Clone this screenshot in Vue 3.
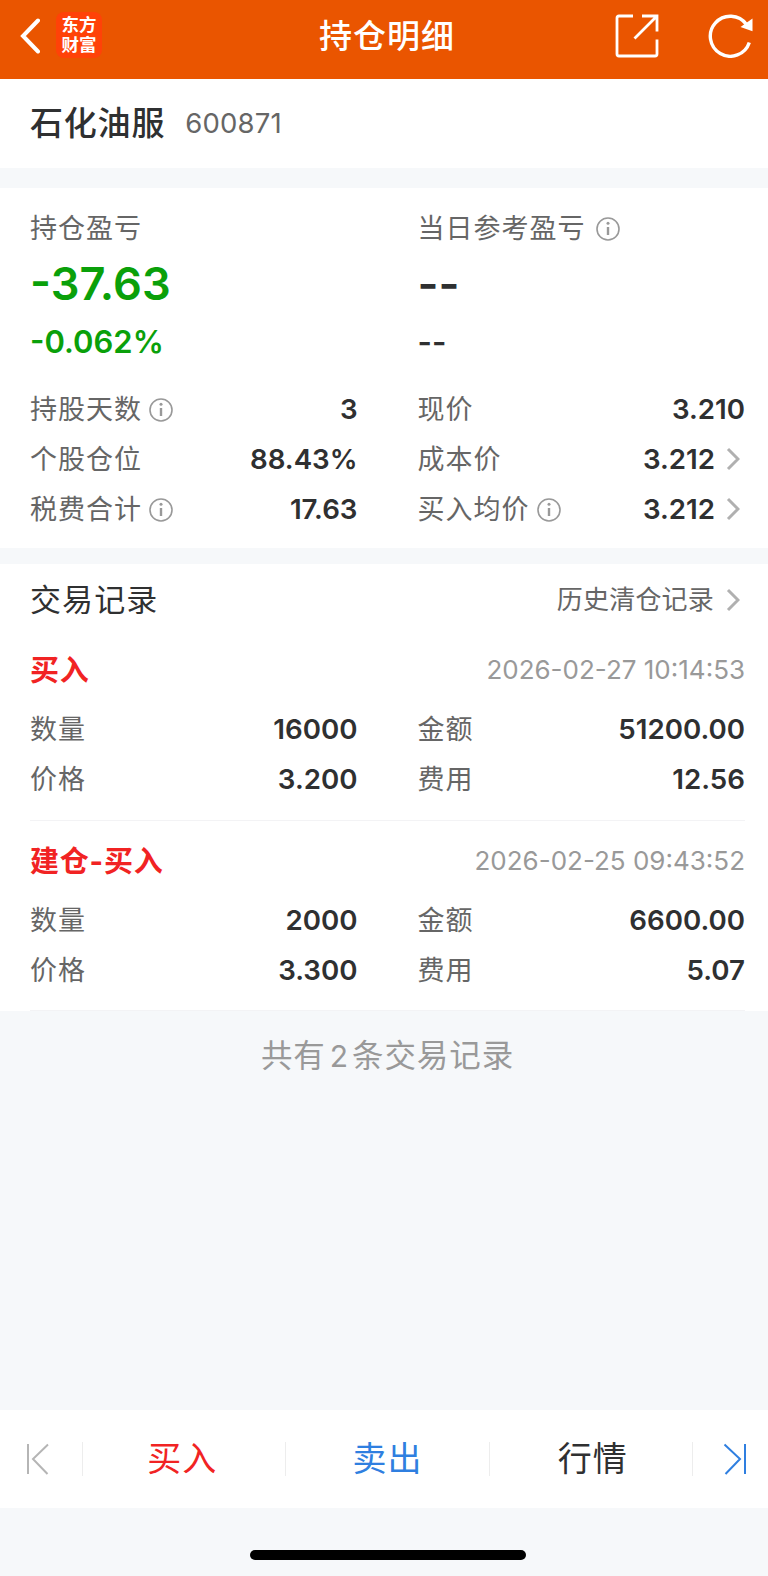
<script setup>
import { ref } from 'vue'

const stock = ref({ name: '石化油服', code: '600871' })

// Position details, listed row by row for the two columns
const details = ref([
  { label: '持股天数', value: '3', info: true },
  { label: '现价', value: '3.210' },
  { label: '个股仓位', value: '88.43%' },
  { label: '成本价', value: '3.212', link: true },
  { label: '税费合计', value: '17.63', info: true },
  { label: '买入均价', value: '3.212', info: true, link: true }
])

const records = ref([
  {
    type: '买入',
    time: '2026-02-27 10:14:53',
    fields: [
      { label: '数量', value: '16000' },
      { label: '金额', value: '51200.00' },
      { label: '价格', value: '3.200' },
      { label: '费用', value: '12.56' }
    ]
  },
  {
    type: '建仓-买入',
    time: '2026-02-25 09:43:52',
    fields: [
      { label: '数量', value: '2000' },
      { label: '金额', value: '6600.00' },
      { label: '价格', value: '3.300' },
      { label: '费用', value: '5.07' }
    ]
  }
])
</script>

<template>
  <div class="page">
    <header class="navbar">
      <div class="nav-left">
        <svg class="back" width="20" height="36" viewBox="0 0 20 36">
          <path d="M18 2.5 L3 18 L18 33.5" />
        </svg>
        <div class="logo"><span>东方</span><span>财富</span></div>
      </div>
      <h1 class="nav-title">持仓明细</h1>
      <div class="nav-right">
        <svg class="share" width="44" height="44" viewBox="0 0 44 44">
          <path d="M18 2 H4 Q2 2 2 4 V40 Q2 42 4 42 H40 Q42 42 42 40 V25.5" />
          <path d="M27 2 H42 V17.5 M42 2 L19.5 24.5" />
        </svg>
        <svg class="refresh" width="46" height="46" viewBox="0 0 46 46">
          <path class="arc" d="M41.3 30.5 A20 20 0 1 1 38.5 12.5" />
          <path class="head" d="M44.5 6.5 V19.3 L32.5 15 Z" />
        </svg>
      </div>
    </header>

    <section class="stock">
      <span class="stock-name">{{ stock.name }}</span>
      <span class="stock-code">{{ stock.code }}</span>
    </section>

    <section class="position">
      <div class="columns">
        <div class="profit green">
          <div class="label">持仓盈亏</div>
          <div class="big">-37.63</div>
          <div class="rate">-0.062%</div>
        </div>
        <div class="profit">
          <div class="label">
            当日参考盈亏
            <svg class="info wide" width="24" height="24" viewBox="0 0 24 24">
              <circle cx="12" cy="12" r="11" />
              <path d="M12 10 V18" />
              <circle class="dot" cx="12" cy="6.2" r="1.5" />
            </svg>
          </div>
          <div class="big">--</div>
          <div class="rate">--</div>
        </div>
      </div>
      <div class="columns rows">
        <div v-for="item in details" :key="item.label" class="row">
          <span class="label">
            {{ item.label }}
            <svg v-if="item.info" class="info" width="24" height="24" viewBox="0 0 24 24">
              <circle cx="12" cy="12" r="11" />
              <path d="M12 10 V18" />
              <circle class="dot" cx="12" cy="6.2" r="1.5" />
            </svg>
          </span>
          <span class="value">
            {{ item.value }}
            <svg v-if="item.link" class="chevron" width="14" height="24" viewBox="0 0 14 24">
              <path d="M2 2 L12 12 L2 22" />
            </svg>
          </span>
        </div>
      </div>
    </section>

    <section class="trades">
      <div class="trades-head">
        <h2>交易记录</h2>
        <a class="history">
          历史清仓记录
          <svg class="chevron" width="14" height="24" viewBox="0 0 14 24">
            <path d="M2 2 L12 12 L2 22" />
          </svg>
        </a>
      </div>
      <article v-for="record in records" :key="record.time" class="record">
        <div class="record-head">
          <span class="type">{{ record.type }}</span>
          <time>{{ record.time }}</time>
        </div>
        <div class="columns rows">
          <div v-for="field in record.fields" :key="field.label" class="row">
            <span class="label">{{ field.label }}</span>
            <span class="value">{{ field.value }}</span>
          </div>
        </div>
      </article>
    </section>

    <p class="total">共有<span class="count">{{ records.length }}</span>条交易记录</p>

    <footer class="toolbar">
      <button class="step">
        <svg class="prev" width="24" height="32" viewBox="0 0 24 32">
          <path d="M2 1 V31 M22 1.5 L7 16 L21.5 31" />
        </svg>
      </button>
      <button class="action buy">买入</button>
      <button class="action sell">卖出</button>
      <button class="action quote">行情</button>
      <button class="step last">
        <svg class="next" width="24" height="32" viewBox="0 0 24 32">
          <path d="M22 1 V31 M1.5 1.5 L17 16 L2.5 31" />
        </svg>
      </button>
    </footer>
    <div class="home"><div class="home-bar"></div></div>
  </div>
</template>

<style>
body {
  margin: 0;
  background: #f6f8fa;
}
</style>

<style scoped>
.page {
  display: flex;
  flex-direction: column;
  height: 1576px;
  overflow: hidden;
  background: #f6f8fa;
  color: #2f3031;
  font-family: Inter, "Noto Sans CJK SC", sans-serif;
}

svg {
  display: block;
  flex: none;
  fill: none;
}

/* Top bar */
.navbar {
  display: grid;
  grid-template-columns: 1fr auto 1fr;
  align-items: center;
  height: 79px;
  padding: 0 14px 7px 20px;
  box-sizing: border-box;
  background: #ea5500;
  color: #fff;
}
.nav-left,
.nav-right {
  display: flex;
  align-items: center;
}
.nav-right {
  justify-content: flex-end;
  gap: 49px;
}
.back {
  margin-top: -1px;
  stroke: #fff;
  stroke-width: 4;
  stroke-linecap: round;
}
.logo {
  display: flex;
  flex-direction: column;
  align-items: center;
  justify-content: center;
  width: 46px;
  height: 46px;
  margin: -2px 0 0 16px;
  border-radius: 8px;
  background: #ff4208;
  font-size: 17.5px;
  line-height: 20px;
  font-weight: 700;
}
.nav-title {
  margin: 0;
  font-size: 33px;
  line-height: 40px;
  font-weight: 500;
  letter-spacing: 1px;
}
.share {
  stroke: #fff;
  stroke-width: 2.8;
}
.refresh {
  margin-top: -2px;
}
.arc {
  stroke: #fff;
  stroke-width: 3.4;
}
.head {
  fill: #fff;
}

/* Stock name */
.stock {
  display: flex;
  align-items: center;
  gap: 20px;
  height: 89px;
  padding: 0 0 5px 30px;
  box-sizing: border-box;
  background: #fff;
}
.stock-name {
  font-size: 33px;
  font-weight: 500;
  letter-spacing: 0.8px;
}
.stock-code {
  margin-top: 3px;
  color: #666;
  font-size: 27.5px;
  letter-spacing: 0.2px;
}

/* Position */
.position {
  height: 360px;
  margin: 20px 0 16px;
  padding: 15px 23px 0 30px;
  box-sizing: border-box;
  background: #fff;
}
.columns {
  display: grid;
  grid-template-columns: 1fr 1fr;
  column-gap: 60px;
}
.label {
  display: flex;
  align-items: center;
  padding-top: 1px;
  color: #666;
  font-size: 27px;
  line-height: 50px;
  letter-spacing: 1px;
}
.info {
  margin-left: 7px;
  stroke: #999;
  stroke-width: 1.6;
}
.info path {
  stroke-width: 2.4;
}
.info.wide {
  margin-left: 10px;
}
.dot {
  fill: #999;
  stroke: none;
}
.big {
  height: 60px;
  font-size: 45.2px;
  line-height: 60px;
  font-weight: 600;
}
.rate {
  height: 56px;
  font-size: 31px;
  line-height: 56px;
  font-weight: 600;
}
.green .big,
.green .rate {
  color: #0aa00a;
}
.rows {
  grid-auto-rows: 50px;
}
.position .rows {
  margin-top: 14px;
}
.row {
  display: flex;
  align-items: center;
  justify-content: space-between;
}
.value {
  display: flex;
  align-items: center;
  font-size: 27.7px;
  font-weight: 600;
}
.chevron {
  margin: 0 5px 0 11px;
  stroke: #b0b0b0;
  stroke-width: 3;
}

/* Trade records */
.trades {
  height: 447px;
  padding: 0 23px 0 30px;
  box-sizing: border-box;
  background: #fff;
}
.trades-head {
  display: flex;
  align-items: center;
  justify-content: space-between;
  height: 66px;
}
.trades-head h2 {
  margin: 0;
  font-size: 31px;
  font-weight: 400;
  letter-spacing: 1.1px;
}
.history {
  display: flex;
  align-items: center;
  color: #666;
  font-size: 26px;
  letter-spacing: 0.2px;
}
.history .chevron {
  margin: 6px 5px 0 12px;
}
.record {
  height: 191px;
  box-sizing: border-box;
  padding-top: 8px;
  border-bottom: 1px solid #f3f3f5;
}
.record:last-child {
  height: 190px;
}
.record-head {
  display: flex;
  align-items: center;
  justify-content: space-between;
  height: 60px;
}
.record .rows {
  margin-top: 6px;
}
.type {
  color: #f12323;
  font-size: 29px;
  font-weight: 700;
  letter-spacing: 0.8px;
}
time {
  padding-top: 2px;
  color: #999;
  font-size: 26px;
}

.total {
  display: flex;
  justify-content: center;
  margin: 20px 0 0;
  padding-left: 7px;
  color: #999;
  font-size: 31.5px;
  line-height: 50px;
  letter-spacing: 0.9px;
}
.count {
  margin: 0 4px 0 4px;
  font-size: 30px;
  letter-spacing: 0;
}

/* Bottom toolbar */
.toolbar {
  display: flex;
  align-items: center;
  height: 98px;
  margin-top: auto;
  background: #fff;
}
.toolbar button {
  display: flex;
  align-items: center;
  justify-content: center;
  height: 34px;
  padding: 0;
  border: 0;
  border-right: 1px solid #ededed;
  background: none;
  color: #2f3031;
  font-family: inherit;
}
.toolbar .action {
  flex: 1;
  padding-bottom: 5px;
  box-sizing: border-box;
  font-size: 34px;
  letter-spacing: 1px;
}
.toolbar .step {
  width: 83px;
  box-sizing: border-box;
  padding-right: 6px;
}
.toolbar .step.last {
  width: 75px;
  padding: 0 0 0 10px;
  border-right: 0;
}
.toolbar .buy {
  color: #f12323;
  text-indent: -4px;
}
.toolbar .sell {
  color: #2f7fe0;
}
.toolbar .quote {
  text-indent: 4px;
}
.prev {
  stroke: #b5b5b5;
  stroke-width: 2;
}
.next {
  stroke: #2f7fe0;
  stroke-width: 2;
}

.home {
  display: flex;
  justify-content: center;
  height: 26px;
  padding: 42px 0 0 8px;
}
.home-bar {
  width: 276px;
  height: 10px;
  border-radius: 5px;
  background: #000;
}
</style>
